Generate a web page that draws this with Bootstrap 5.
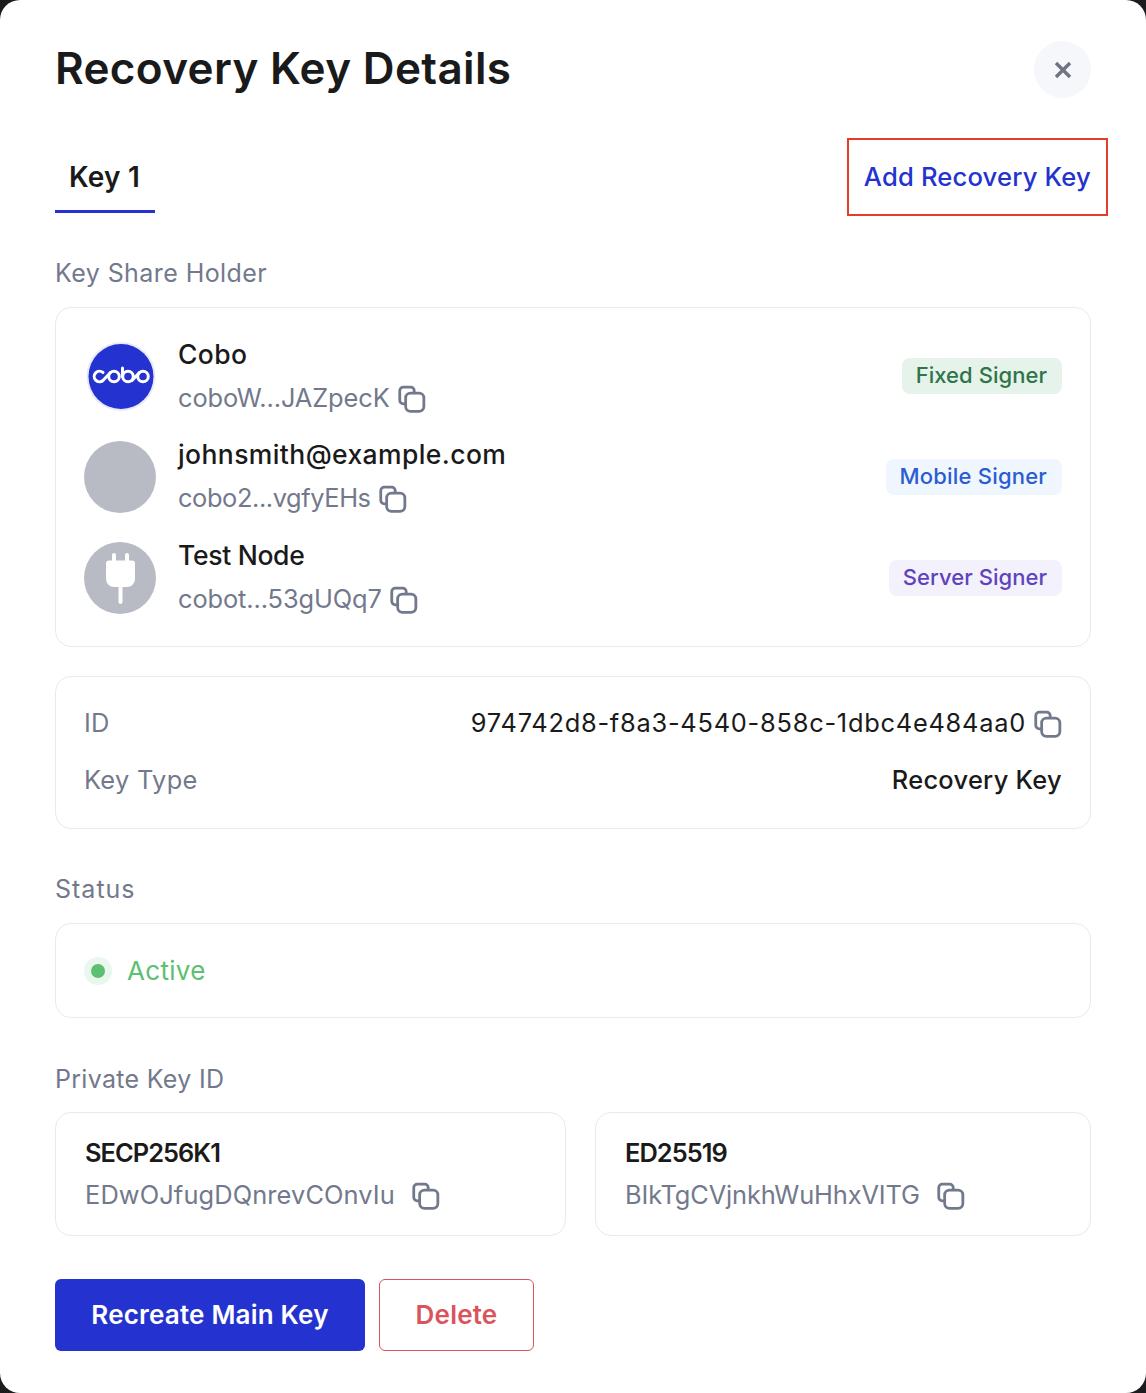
<!doctype html>
<html lang="en"><head><meta charset="utf-8"><title>Recovery Key Details</title>
<link href="https://cdn.jsdelivr.net/npm/bootstrap@5.3.0/dist/css/bootstrap.min.css" rel="stylesheet">
<style>
html,body{background:#1c1c1e;margin:0;height:1393px;overflow:hidden}
body{font-family:Inter,"Noto Sans",sans-serif;color:#1a1a1a}
.sheet{background:#fff;border-radius:20px;height:1393px;padding:0 55px}
.top-row{height:138px;padding-top:40px}
.ttl{font-size:44px;font-weight:600;line-height:57px;margin:0;letter-spacing:.35px}
.closer{width:57px;height:57px;background:#f6f7fb;border:0;border-radius:50%;padding:0;margin-top:1px}
.tab-row{height:78px}
.tab-one{width:100px;height:75px;border-bottom:3px solid #2433cf;font-size:28px;font-weight:600;line-height:78px;padding-left:14px;letter-spacing:.2px}
.add-box{border:2px solid #e53e26;margin-right:-17px;padding:0 15px;height:78px;line-height:74px;color:#2433cf;font-size:25.6px;font-weight:500;letter-spacing:.18px;white-space:nowrap}
.sec-lab{color:#73798c;font-size:25px;line-height:36px;letter-spacing:.42px}
.lab-a{margin-top:39px;margin-bottom:16px}
.panel{border:1px solid #e9eaef;border-radius:16px;background:#fff}
.holders{height:340px;padding:33px 28px 0}
.hold-row{height:101px}
.hold-row.first-row{height:100px}
.ava{width:72px;height:72px;border-radius:50%;background:#b8bbc4;flex:none}
.ava-logo{background:none}
.hold-txt{margin-left:22px;margin-top:-5px}
.hold-name{font-size:26.5px;font-weight:500;line-height:36px;letter-spacing:.4px}
.hold-name.tight{letter-spacing:-.3px}
.hold-sub{color:#73798c;font-size:25.4px;line-height:36px;margin-top:8px;letter-spacing:-.1px}
.hold-sub.tighter{letter-spacing:-.4px}
.kop{width:30px;height:30px;vertical-align:-7px;margin-left:6px}
.tagx{font-size:22px;font-weight:500;line-height:34px;height:36px;padding:0 15px 0 14px;border-radius:8px;letter-spacing:.05px;margin-top:18px}
.tg-f{background:#e5f3ea;color:#2f7549;margin-top:17px}
.tg-m{background:#f0f6fd;color:#2a5dd1;letter-spacing:.2px}
.tg-s{background:#f3f1fb;color:#5f43bd}
.idp{height:153px;margin-top:29px;padding:28px 28px 0 28px}
.idp-row{height:36px;line-height:36px;font-size:25.4px;letter-spacing:.3px;margin-bottom:21px}
.idp-k{color:#73798c}
.idp-v{font-weight:500;color:#1a1a1a}
.idp-id{font-weight:400;letter-spacing:.75px}
.lab-b{margin-top:42px;margin-bottom:16px;letter-spacing:1px}
.stat{height:95px;padding:0 28px;color:#5dbf72;font-size:26px;letter-spacing:.3px}
.stat-dot{width:28px;height:28px;border-radius:50%;background:#eaf7ee;margin-right:15px}
.stat-dot i{display:block;width:14px;height:14px;border-radius:50%;background:#5dbf72}
.lab-c{margin-top:43px;margin-bottom:15px;letter-spacing:.3px}
.pk-grid{display:grid;grid-template-columns:511px 496px;column-gap:29px}
.pk{height:124px;padding:22px 29px 0}
.pk-t{font-size:25.4px;font-weight:600;line-height:36px;letter-spacing:-.95px}
.pk-s{color:#73798c;font-size:25.4px;line-height:36px;margin-top:6px;letter-spacing:.12px}
.pk-s.narrow{letter-spacing:-.13px}
.pk-s .kop{margin-left:15px}
.act{margin-top:43px;gap:14px}
.act .btn{height:72px;font-size:26px;font-weight:600;border-radius:6px;padding:0 0 2px;letter-spacing:.2px}
.bt-main{width:310px;background:#2433cf;color:#fff;border:0}
.bt-del{width:155px;background:#fff;color:#d9545c;border:1px solid #d9545c}
</style></head><body>
<svg width="0" height="0" class="d-block position-absolute"><defs>
<symbol id="ic-copy" viewBox="0 0 28 28"><g fill="none" stroke="#73798c" stroke-width="2.600" stroke-linejoin="round"><path d="M9 18.500H6.800A3.300 3.300 0 0 1 3.500 15.200V6.300A3.300 3.300 0 0 1 6.800 3h6.900A3.300 3.300 0 0 1 17 6.300V8"/><rect x="9" y="8.500" width="17" height="17" rx="4.500"/></g></symbol>
</defs></svg>
<div class="sheet">
  <div class="top-row d-flex justify-content-between align-items-start">
    <h1 class="ttl">Recovery Key Details</h1>
    <button class="closer d-flex align-items-center justify-content-center" aria-label="Close"><svg width="18" height="18" viewBox="0 0 18 18"><path d="M2 2L16 16M16 2L2 16" stroke="#6f7484" stroke-width="3.400"/></svg></button>
  </div>
  <div class="tab-row d-flex justify-content-between">
    <div class="tab-one">Key 1</div>
    <div class="add-box">Add Recovery Key</div>
  </div>
  <div class="sec-lab lab-a">Key Share Holder</div>
  <div class="panel holders">
    <div class="hold-row first-row d-flex align-items-start">
      <div class="ava ava-logo"><svg width="72" height="72" viewBox="0 0 72 72"><circle cx="37" cy="35.500" r="34.500" fill="#e9eaf5"/><circle cx="37" cy="35.500" r="32.500" fill="#2433cf"/><g fill="none" stroke="#fff" stroke-width="3" stroke-linecap="round"><path d="M19 31.500A5.300 5.300 0 1 0 19 39.500L26.500 31.500"/><circle cx="30" cy="35.500" r="5.300"/><path d="M38.500 27V35.500"/><circle cx="44" cy="35.500" r="5.300"/><path d="M48 39.500L55.500 31.500"/><circle cx="59" cy="35.500" r="5.300"/></g></svg></div>
      <div class="hold-txt flex-grow-1"><div class="hold-name">Cobo</div><div class="hold-sub">coboW...JAZpecK<svg class="kop"><use href="#ic-copy"/></svg></div></div>
      <div class="tagx tg-f">Fixed Signer</div>
    </div>
    <div class="hold-row d-flex align-items-start">
      <div class="ava"></div>
      <div class="hold-txt flex-grow-1"><div class="hold-name">johnsmith@example.com</div><div class="hold-sub tighter">cobo2...vgfyEHs<svg class="kop"><use href="#ic-copy"/></svg></div></div>
      <div class="tagx tg-m">Mobile Signer</div>
    </div>
    <div class="hold-row d-flex align-items-start">
      <div class="ava d-flex align-items-center justify-content-center"><svg width="29" height="51" viewBox="0 0 29 51"><path fill="#fff" d="M6 2a2 2 0 0 1 4 0V7.500h9V2a2 2 0 0 1 4 0V7.500h3a3 3 0 0 1 3 3V26a8 8 0 0 1-8 8h-4.500V49a2 2 0 0 1-4 0V34H8a8 8 0 0 1-8-8V10.500a3 3 0 0 1 3-3h3z"/></svg></div>
      <div class="hold-txt flex-grow-1"><div class="hold-name tight">Test Node</div><div class="hold-sub">cobot...53gUQq7<svg class="kop"><use href="#ic-copy"/></svg></div></div>
      <div class="tagx tg-s">Server Signer</div>
    </div>
  </div>
  <div class="panel idp">
    <div class="idp-row d-flex justify-content-between"><span class="idp-k">ID</span><span class="idp-id">974742d8-f8a3-4540-858c-1dbc4e484aa0<svg class="kop"><use href="#ic-copy"/></svg></span></div>
    <div class="idp-row d-flex justify-content-between"><span class="idp-k">Key Type</span><span class="idp-v">Recovery Key</span></div>
  </div>
  <div class="sec-lab lab-b">Status</div>
  <div class="panel stat d-flex align-items-center"><span class="stat-dot d-flex align-items-center justify-content-center"><i></i></span>Active</div>
  <div class="sec-lab lab-c">Private Key ID</div>
  <div class="pk-grid">
    <div class="panel pk"><div class="pk-t">SECP256K1</div><div class="pk-s">EDwOJfugDQnrevCOnvIu<svg class="kop"><use href="#ic-copy"/></svg></div></div>
    <div class="panel pk"><div class="pk-t">ED25519</div><div class="pk-s narrow">BIkTgCVjnkhWuHhxVITG<svg class="kop"><use href="#ic-copy"/></svg></div></div>
  </div>
  <div class="act d-flex">
    <button class="btn bt-main">Recreate Main Key</button>
    <button class="btn bt-del">Delete</button>
  </div>
</div>
<script src="https://cdn.jsdelivr.net/npm/bootstrap@5.3.0/dist/js/bootstrap.bundle.min.js"></script>
</body></html>
